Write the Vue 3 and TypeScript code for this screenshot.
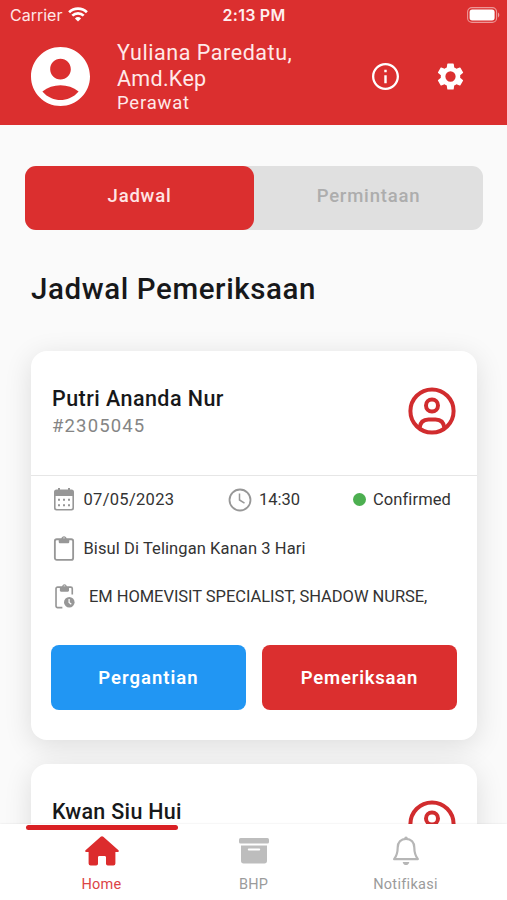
<script setup lang="ts">
interface Visit {
  name: string
  id: string
  date: string
  time: string
  status: string
  complaint: string
  services: string
}

const visits: Visit[] = [
  {
    name: 'Putri Ananda Nur',
    id: '#2305045',
    date: '07/05/2023',
    time: '14:30',
    status: 'Confirmed',
    complaint: 'Bisul Di Telingan Kanan 3 Hari',
    services: 'EM HOMEVISIT SPECIALIST, SHADOW NURSE,',
  },
]
const nextName = 'Kwan Siu Hui'
</script>

<template>
  <div class="screen">
    <header class="header">
      <div class="status">
        <div class="carrier">
          <span class="carrier-name">Carrier</span>
          <svg class="wifi" viewBox="0 0 20 15" fill="none" stroke="#fff" stroke-width="2.7">
            <path d="M1.1 5.2a12.8 12.8 0 0 1 17.8 0" />
            <path d="M4.3 8.6a8.2 8.2 0 0 1 11.4 0" />
            <path d="M10 14.6 6.9 11.4a4.6 4.6 0 0 1 6.2 0z" fill="#fff" stroke="none" />
          </svg>
        </div>
        <span class="clock">2:13 PM</span>
        <svg class="battery" viewBox="0 0 33 16">
          <rect x=".6" y=".6" width="29" height="14.8" rx="4.4" fill="none" stroke="#fff" stroke-opacity=".5" stroke-width="1.1" />
          <rect x="2.6" y="2.6" width="25" height="10.8" rx="2.6" fill="#fff" />
          <path d="M31 5.6c1.7.7 1.7 4.1 0 4.8z" fill="#fff" fill-opacity=".55" />
        </svg>
      </div>
      <div class="profile">
        <svg class="avatar" viewBox="2 2 20 20" fill="#fff">
          <path d="M12 2C6.48 2 2 6.48 2 12s4.48 10 10 10 10-4.480 10-10S17.520 2 12 2zm0 4c1.930 0 3.500 1.570 3.500 3.500S13.930 13 12 13s-3.500-1.570-3.500-3.500S10.070 6 12 6zm0 14c-2.030 0-4.430-.820-6.140-2.880a9.950 9.950 0 0 1 12.280 0C16.430 19.180 14.030 20 12 20z" />
        </svg>
        <div class="who">
          <div class="name name-first">Yuliana Paredatu,</div>
          <div class="name name-last">Amd.Kep</div>
          <div class="role">Perawat</div>
        </div>
        <svg class="info" viewBox="2 2 20 20" fill="#fff">
          <path d="M11.100 7h1.800v1.800h-1.800zm0 4h1.800v6h-1.800zm.900-9C6.480 2 2 6.480 2 12s4.480 10 10 10 10-4.480 10-10S17.520 2 12 2zm0 18.300c-4.580 0-8.300-3.720-8.300-8.300S7.420 3.700 12 3.700s8.300 3.720 8.300 8.300-3.720 8.300-8.300 8.300z" />
        </svg>
        <svg class="gear" viewBox="2 2 20 20" fill="#fff">
          <path d="M19.140 12.940c.04-.3.060-.61.060-.94s-.02-.64-.07-.94l2.030-1.580a.49.49 0 0 0 .12-.61l-1.920-3.320a.49.49 0 0 0-.59-.22l-2.390.96c-.5-.38-1.030-.7-1.620-.94l-.36-2.540a.48.48 0 0 0-.48-.41h-3.840c-.24 0-.43.17-.47.41l-.36 2.540c-.59.24-1.130.57-1.620.94l-2.390-.96c-.22-.08-.47 0-.59.22L2.740 8.870c-.12.21-.08.47.12.61l2.030 1.580c-.05.3-.09.63-.09.94s.02.64.07.94l-2.030 1.580a.49.49 0 0 0-.12.61l1.920 3.320c.12.22.37.29.59.22l2.390-.96c.5.38 1.030.7 1.620.94l.36 2.540c.05.24.24.41.48.41h3.840c.24 0 .44-.17.47-.41l.36-2.540c.59-.24 1.130-.56 1.620-.94l2.390.96c.22.08.47 0 .59-.22l1.920-3.320a.49.49 0 0 0-.12-.61zM12 15.800a3.800 3.800 0 1 1 0-7.600 3.800 3.800 0 0 1 0 7.600z" />
        </svg>
      </div>
    </header>

    <main class="content">
      <div class="tabs">
        <button class="tab tab-active">Jadwal</button>
        <button class="tab tab-idle">Permintaan</button>
      </div>
      <h1 class="title">Jadwal Pemeriksaan</h1>

      <article v-for="visit in visits" :key="visit.id" class="card">
        <div class="card-head">
          <div>
            <div class="patient">{{ visit.name }}</div>
            <div class="number">{{ visit.id }}</div>
          </div>
          <svg class="person" viewBox="0 0 48 48" fill="none" stroke="#d12c2e" stroke-width="4">
            <circle cx="24" cy="24" r="21.600" />
            <circle cx="24" cy="18.500" r="6" />
            <path d="M11.500 41c.7-6 4.500-8.600 9-8.600h7c4.500 0 8.300 2.600 9 8.600" />
          </svg>
        </div>
        <div class="details">
          <div class="row">
            <div class="date">
              <svg class="icon" viewBox="0 0 22 24">
                <path d="M3.500 2H5V.5h2V2h8V.5h2V2h1.500A2.500 2.500 0 0 1 21 4.500v16a2.500 2.500 0 0 1-2.500 2.500h-15A2.500 2.500 0 0 1 1 20.500v-16A2.500 2.500 0 0 1 3.500 2zM2.600 8.600v11.700c0 .7.5 1.200 1.200 1.200h14.400c.7 0 1.200-.5 1.200-1.200V8.600z" fill="#979797" fill-rule="evenodd" />
                <path d="M5 12.300h12M5 17.700h12" stroke="#979797" stroke-width="2" stroke-dasharray="2 3" />
              </svg>
              <span class="date-text">{{ visit.date }}</span>
            </div>
            <div class="time">
              <svg class="time-icon" viewBox="0 0 24 24" fill="none" stroke="#979797">
                <circle cx="12" cy="12" r="10.500" stroke-width="1.800" />
                <path d="M11.500 5.500V12l5 3.200" stroke-width="1.500" />
              </svg>
              <span class="time-text">{{ visit.time }}</span>
            </div>
            <div class="state">
              <i class="dot"></i>
              <span class="state-text">{{ visit.status }}</span>
            </div>
          </div>
          <div class="row">
            <svg class="icon" viewBox="0 0 22 26">
              <rect x="1.500" y="3.400" width="19" height="21.500" rx="2" fill="none" stroke="#979797" stroke-width="1.900" />
              <path d="M5.500 3h2.700c.2-3.800 5.400-3.800 5.600 0h2.700v3c0 1-.7 1.600-1.600 1.600H7.100c-.9 0-1.600-.6-1.600-1.600zM11 1.500a1 1 0 1 0 0 2 1 1 0 0 0 0-2z" fill="#979797" fill-rule="evenodd" />
            </svg>
            <span class="complaint">{{ visit.complaint }}</span>
          </div>
          <div class="row">
            <svg class="icon" viewBox="0 0 22 26">
              <path d="M9.300 24.500H4.300a1.600 1.600 0 0 1-1.600-1.600V4.800c0-.9.700-1.600 1.600-1.600H18c.9 0 1.600.7 1.600 1.600v6" fill="none" stroke="#979797" stroke-width="1.700" />
              <path d="M6.700 3h2.300c.2-3.600 4.800-3.600 5 0h2.200v3.800c0 .8-.5 1.200-1.200 1.200H7.900c-.7 0-1.200-.4-1.200-1.200zm4.800-1.400a1 1 0 1 0 0 2 1 1 0 0 0 0-2z" fill="#979797" fill-rule="evenodd" />
              <circle cx="16.500" cy="19" r="5.500" fill="#979797" />
              <path d="M16.300 15.500v3.700l2.300 1.800" fill="none" stroke="#fff" stroke-width="1.300" />
            </svg>
            <span class="services">{{ visit.services }}</span>
          </div>
        </div>
        <div class="actions">
          <button class="action action-swap">Pergantian</button>
          <button class="action action-check">Pemeriksaan</button>
        </div>
      </article>

      <article class="card">
        <div class="card-head">
          <div class="patient patient-next">{{ nextName }}</div>
          <svg class="person" viewBox="0 0 48 48" fill="none" stroke="#d12c2e" stroke-width="4">
            <circle cx="24" cy="24" r="21.600" />
            <circle cx="24" cy="18.500" r="6" />
            <path d="M11.500 41c.7-6 4.500-8.600 9-8.600h7c4.500 0 8.300 2.600 9 8.600" />
          </svg>
        </div>
      </article>
    </main>

    <nav class="nav">
      <div class="indicator"></div>
      <div class="nav-item nav-current">
        <svg class="nav-icon" viewBox="0 0 34 30" fill="#dc2c2d">
          <path d="M15.700.7a2 2 0 0 1 2.600 0l14.900 13.200c1.100 1 .7 2.100-.8 2.100h-2v11.500a2 2 0 0 1-2 2h-5.600a1.800 1.800 0 0 1-1.800-1.800v-6.200c0-.8-.6-1.400-1.400-1.400h-5.200c-.8 0-1.400.6-1.400 1.400v6.200a1.800 1.800 0 0 1-1.800 1.800H5.600a2 2 0 0 1-2-2V16h-2c-1.500 0-1.900-1.100-.8-2.100z" />
        </svg>
        <span class="nav-home">Home</span>
      </div>
      <div class="nav-item">
        <svg class="nav-icon" viewBox="0 0 34 30" fill="#bdbdbd">
          <rect x="2" y="2" width="30" height="5.500" rx="1.600" />
          <path d="M4 9.400h26v15.400a2.600 2.600 0 0 1-2.600 2.600H6.600A2.600 2.600 0 0 1 4 24.800zm7.800 3.200a1 1 0 0 0 0 2h10.400a1 1 0 0 0 0-2z" fill-rule="evenodd" />
        </svg>
        <span class="nav-bhp">BHP</span>
      </div>
      <div class="nav-item">
        <svg class="nav-icon" viewBox="0 0 34 30" fill="none" stroke="#b6b6b6" stroke-width="2.200">
          <path d="M17 2.800c-5.200 0-8.300 3.800-8.300 8.600 0 6.100-1.300 8.700-3.600 11.700h23.800c-2.300-3-3.600-5.600-3.600-11.700 0-4.800-3.100-8.600-8.300-8.600z" stroke-linejoin="round" />
          <path d="M15.200 2.800a1.800 2.300 0 0 1 3.600 0z" fill="#b6b6b6" stroke="none" />
          <path d="M13.700 26h6.600c-.4 4.100-6.200 4.100-6.600 0z" fill="#b6b6b6" stroke="none" />
        </svg>
        <span class="nav-bell">Notifikasi</span>
      </div>
    </nav>
  </div>
</template>

<style>
body {
  margin: 0;
  background: #fafafa;
}
</style>

<style scoped>
.screen {
  display: flex;
  flex-direction: column;
  width: 507px;
  height: 900px;
  overflow: hidden;
  background: #fafafa;
  color: #17181a;
  font-family: Roboto, 'Liberation Sans', sans-serif;
  white-space: nowrap;
}
svg {
  display: block;
  flex: none;
}
button {
  border: 0;
  padding: 0;
  font-family: inherit;
}
.header {
  flex: none;
  height: 125px;
  background: #db2f2f;
  color: #fff;
}
.status {
  display: grid;
  grid-template-columns: 1fr auto 1fr;
  align-items: center;
  height: 29px;
  padding: 0 7px 0 10px;
  font-family: Inter, sans-serif;
}
.carrier {
  display: flex;
  align-items: center;
  gap: 6px;
  color: #ffe6e6;
}
.carrier-name {
  font-size: 16px;
}
.wifi {
  width: 20px;
  height: 15px;
}
.clock {
  margin-right: 2px;
  font-size: 16px;
  font-weight: 600;
  letter-spacing: 0.25px;
  color: #ffeeee;
}
.battery {
  width: 33px;
  height: 16px;
  justify-self: end;
}
.profile {
  display: flex;
  align-items: flex-start;
  padding-left: 31px;
}
.avatar {
  width: 59px;
  height: 59px;
  margin-top: 18px;
}
.who {
  width: 255px;
  margin-left: 27px;
  padding-top: 11px;
  color: #ffe9e9;
}
.name {
  height: 26px;
  font-size: 21.500px;
  line-height: 26px;
}
.name-first {
  letter-spacing: 0.55px;
}
.name-last {
  letter-spacing: 0.3px;
}
.role {
  font-size: 18.500px;
  line-height: 22px;
  letter-spacing: 0.8px;
}
.info {
  width: 27px;
  height: 27px;
  margin-top: 34px;
}
.gear {
  width: 27px;
  height: 27px;
  margin: 34px 0 0 38px;
}
.content {
  flex: 1;
  min-height: 0;
  overflow: hidden;
  padding: 40.500px 30px 0 31px;
}
.tabs {
  display: grid;
  grid-template-columns: 1fr 1fr;
  height: 64.500px;
  margin: 0 -6px;
  border-radius: 11px;
  background: #e0e0e0;
}
.tab {
  border-radius: 11px;
  background: none;
  color: #adadad;
  font-size: 18.500px;
  font-weight: 500;
  line-height: 60px;
  padding-bottom: 4px;
}
.tab-active {
  background: #db2f2f;
  color: #ffe4e4;
  letter-spacing: 0.8px;
}
.tab-idle {
  letter-spacing: 0.8px;
}
.title {
  margin: 40px 0 0;
  font-size: 29.500px;
  font-weight: 500;
  line-height: 38px;
  letter-spacing: 0.6px;
}
.card {
  margin-top: 24px;
  height: 389px;
  border-radius: 16px;
  background: #fff;
  box-shadow: 0 6px 28px rgba(0, 0, 0, 0.12);
}
.title + .card {
  margin-top: 43px;
}
.card-head {
  display: flex;
  justify-content: space-between;
  align-items: flex-start;
  box-sizing: border-box;
  height: 125px;
  padding: 34px 21px 0 21px;
  border-bottom: 1px solid #e6e6e6;
}
.patient {
  font-size: 21.500px;
  font-weight: 500;
  line-height: 27px;
  letter-spacing: 0.45px;
}
.patient-next {
  letter-spacing: 0.3px;
}
.number {
  color: #858585;
  font-size: 18.500px;
  line-height: 28px;
  letter-spacing: 1.150px;
}
.person {
  width: 48px;
  height: 48px;
  margin-top: 2px;
}
.details {
  margin-top: -0.500px;
  color: #333;
  font-size: 16.500px;
}
.row {
  display: flex;
  align-items: center;
  height: 48.500px;
  padding: 0 26px 0 22px;
}
.icon {
  width: 22px;
  height: 25px;
}
.date {
  display: flex;
  align-items: center;
  width: 175px;
}
.date-text {
  margin-left: 8.500px;
  letter-spacing: 0.3px;
}
.time {
  display: flex;
  align-items: center;
}
.time-icon {
  width: 24px;
  height: 24px;
}
.time-text {
  margin-left: 7px;
}
.state {
  display: flex;
  align-items: center;
  margin-left: auto;
}
.dot {
  width: 13px;
  height: 13px;
  margin-right: 7px;
  border-radius: 50%;
  background: #4caf50;
}
.state-text {
  letter-spacing: 0.1px;
}
.complaint {
  margin-left: 8.500px;
  letter-spacing: 0.090px;
}
.services {
  margin-left: 14px;
  letter-spacing: -0.050px;
}
.actions {
  display: grid;
  grid-template-columns: 1fr 1fr;
  gap: 16px;
  padding: 24px 20px 0;
}
.action {
  height: 65px;
  border-radius: 8px;
  color: #fff;
  font-size: 18.500px;
  font-weight: 600;
  letter-spacing: 0.8px;
}
.action-swap {
  background: #2196f3;
  letter-spacing: 1px;
}
.action-check {
  background: #db2f2f;
}
.nav {
  position: relative;
  display: grid;
  grid-template-columns: repeat(3, 152px);
  justify-content: center;
  flex: none;
  height: 76px;
  background: #fff;
  box-shadow: 0 0 2px rgba(0, 0, 0, 0.1);
  color: #9b9b9b;
  font-size: 14.500px;
}
.indicator {
  position: absolute;
  top: 0.500px;
  left: 26px;
  width: 152px;
  height: 5px;
  border-radius: 3px;
  background: #d92024;
}
.nav-item {
  display: flex;
  flex-direction: column;
  align-items: center;
  padding-top: 12px;
}
.nav-icon {
  width: 34px;
  height: 30px;
  margin-bottom: 10px;
}
.nav-current {
  color: #dc4446;
}
.nav-home {
  letter-spacing: 0.2px;
}
.nav-bhp {
  letter-spacing: 0.2px;
}
.nav-bell {
  letter-spacing: 0.3px;
}
</style>
